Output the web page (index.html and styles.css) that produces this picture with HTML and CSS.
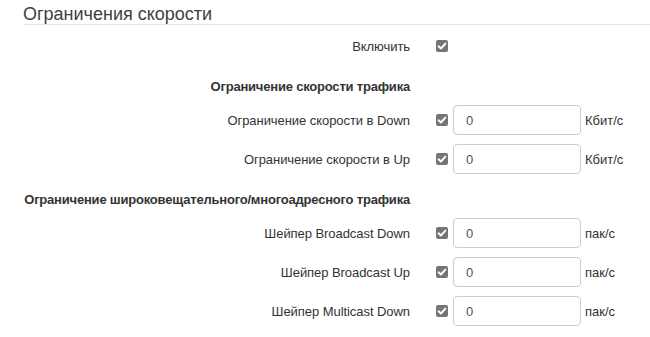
FILE: index.html
```html
<!DOCTYPE html>
<html lang="ru">
<head>
<meta charset="utf-8">
<link rel="stylesheet" href="styles.css">
</head>
<body>
<div class="page">
  <h3 class="title">Ограничения скорости</h3>
  <div class="form">
    <div class="row">
      <label class="lbl">Включить</label>
      <div class="ctl"><span class="cb"><svg viewBox="0 0 12 12" width="12" height="12"><path d="M2.6 6.3 L4.9 8.5 L9.4 3.6" fill="none" stroke="#fff" stroke-width="1.9" stroke-linecap="round" stroke-linejoin="round"/></svg></span></div>
    </div>
    <div class="row head">
      <span class="lbl">Ограничение скорости трафика</span>
    </div>
    <div class="row">
      <label class="lbl">Ограничение скорости в Down</label>
      <div class="ctl"><span class="cb"><svg viewBox="0 0 12 12" width="12" height="12"><path d="M2.6 6.3 L4.9 8.5 L9.4 3.6" fill="none" stroke="#fff" stroke-width="1.9" stroke-linecap="round" stroke-linejoin="round"/></svg></span><input class="inp" type="text" value="0"><span class="unit">Кбит/с</span></div>
    </div>
    <div class="row">
      <label class="lbl">Ограничение скорости в Up</label>
      <div class="ctl"><span class="cb"><svg viewBox="0 0 12 12" width="12" height="12"><path d="M2.6 6.3 L4.9 8.5 L9.4 3.6" fill="none" stroke="#fff" stroke-width="1.9" stroke-linecap="round" stroke-linejoin="round"/></svg></span><input class="inp" type="text" value="0"><span class="unit">Кбит/с</span></div>
    </div>
    <div class="row head">
      <span class="lbl">Ограничение широковещательного/многоадресного трафика</span>
    </div>
    <div class="row">
      <label class="lbl">Шейпер Broadcast Down</label>
      <div class="ctl"><span class="cb"><svg viewBox="0 0 12 12" width="12" height="12"><path d="M2.6 6.3 L4.9 8.5 L9.4 3.6" fill="none" stroke="#fff" stroke-width="1.9" stroke-linecap="round" stroke-linejoin="round"/></svg></span><input class="inp" type="text" value="0"><span class="unit">пак/с</span></div>
    </div>
    <div class="row">
      <label class="lbl">Шейпер Broadcast Up</label>
      <div class="ctl"><span class="cb"><svg viewBox="0 0 12 12" width="12" height="12"><path d="M2.6 6.3 L4.9 8.5 L9.4 3.6" fill="none" stroke="#fff" stroke-width="1.9" stroke-linecap="round" stroke-linejoin="round"/></svg></span><input class="inp" type="text" value="0"><span class="unit">пак/с</span></div>
    </div>
    <div class="row">
      <label class="lbl">Шейпер Multicast Down</label>
      <div class="ctl"><span class="cb"><svg viewBox="0 0 12 12" width="12" height="12"><path d="M2.6 6.3 L4.9 8.5 L9.4 3.6" fill="none" stroke="#fff" stroke-width="1.9" stroke-linecap="round" stroke-linejoin="round"/></svg></span><input class="inp" type="text" value="0"><span class="unit">пак/с</span></div>
    </div>
  </div>
</div>
</body>
</html>
```
FILE: styles.css
```css
html, body {
  margin: 0;
  padding: 0;
  background: #fff;
}
body {
  font-family: "Liberation Sans", Arial, sans-serif;
  font-size: 13px;
  color: #333;
}
.page {
  padding-left: 23px;
}
.title {
  margin: 0;
  padding-top: 4px;
  height: 20px;
  font-size: 18px;
  font-weight: normal;
  line-height: 20px;
  color: #404040;
  border-bottom: 1px solid #e5e5e5;
}
.form {
  display: flex;
  flex-direction: column;
  gap: 9px;
  padding-top: 6px;
}
.row {
  display: flex;
  align-items: center;
  min-height: 30px;
}
.row.head {
  min-height: 20px;
  margin-top: 6px;
}
.row.head .lbl {
  font-weight: bold;
  letter-spacing: -0.2px;
}
.lbl {
  width: 387px;
  flex: none;
  display: flex;
  justify-content: flex-end;
  white-space: nowrap;
  letter-spacing: -0.06px;
}
.ctl {
  display: flex;
  align-items: center;
  margin-left: 26px;
}
.cb {
  width: 12px;
  height: 12px;
  border-radius: 2px;
  background: #757575;
  display: inline-flex;
  align-items: center;
  justify-content: center;
}
.cb svg {
  display: block;
}
.inp {
  box-sizing: border-box;
  width: 128px;
  height: 30px;
  margin-left: 5px;
  padding: 0 12px;
  border: 1px solid #ccc;
  border-radius: 4px;
  font-family: "Liberation Sans", Arial, sans-serif;
  font-size: 13px;
  color: #555;
  background: #fff;
  outline: none;
}
.unit {
  margin-left: 4px;
  color: #333;
}
```
